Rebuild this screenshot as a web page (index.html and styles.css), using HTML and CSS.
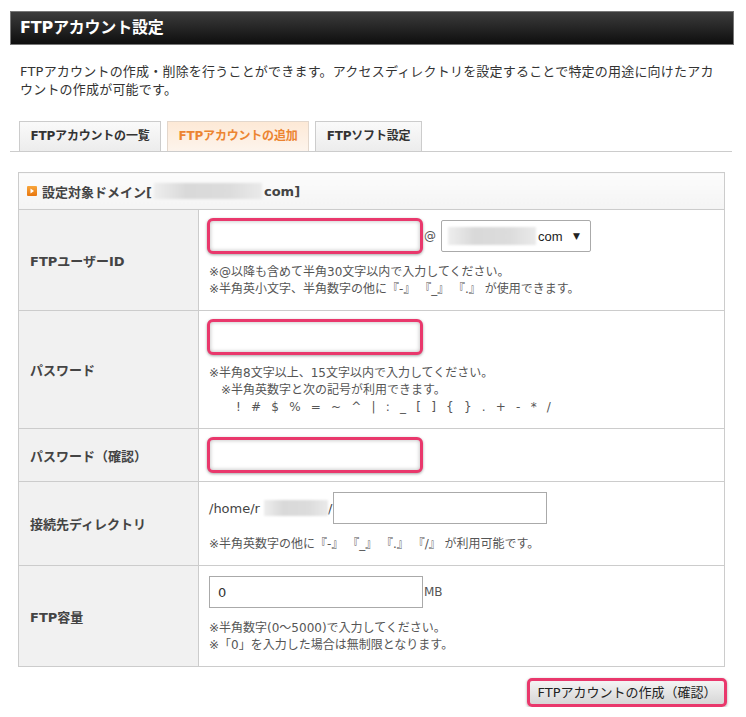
FILE: index.html
```html
<!DOCTYPE html>
<html lang="ja">
<head>
<meta charset="utf-8">
<title>FTPアカウント設定</title>
<link rel="stylesheet" href="styles.css">
</head>
<body>
<div class="page">
  <h1 class="title-bar">FTPアカウント設定</h1>
  <p class="desc">FTPアカウントの作成・削除を行うことができます。アクセスディレクトリを設定することで特定の用途に向けたアカウントの作成が可能です。</p>

  <div class="tabs">
    <div class="tab">FTPアカウントの一覧</div>
    <div class="tab active">FTPアカウントの追加</div>
    <div class="tab">FTPソフト設定</div>
  </div>

  <table class="form">
    <tr class="head-row">
      <td colspan="2">
        <span class="head-inner">
          <svg class="mark" width="10" height="10" viewBox="0 0 10 10"><defs><linearGradient id="og" x1="0" y1="0" x2="0" y2="1"><stop offset="0" stop-color="#f8a63c"/><stop offset="1" stop-color="#e8760e"/></linearGradient></defs><rect x="0" y="0" width="10" height="10" rx="1" fill="url(#og)"/><polygon points="3.5,2.5 7,5 3.5,7.5" fill="#fff"/></svg>
          設定対象ドメイン[<span class="blur b-domain"></span>com]
        </span>
      </td>
    </tr>
    <tr>
      <th>FTPユーザーID</th>
      <td>
        <div class="line">
          <input class="hl" type="text">
          <span class="at">@</span>
          <span class="select"><span class="blur b-sel"></span><span class="sel-text">com</span><span class="arrow">▼</span></span>
        </div>
        <div class="notes">
          <div>※@以降も含めて半角30文字以内で入力してください。</div>
          <div>※半角英小文字、半角数字の他に『-』 『_』 『.』 が使用できます。</div>
        </div>
      </td>
    </tr>
    <tr>
      <th>パスワード</th>
      <td>
        <div class="line"><input class="hl" type="password"></div>
        <div class="notes">
          <div>※半角8文字以上、15文字以内で入力してください。</div>
          <div class="ind1">※半角英数字と次の記号が利用できます。</div>
          <div class="ind2 symbols">! # $ % = ~ ^ | : _ [ ] { } . + - * /</div>
        </div>
      </td>
    </tr>
    <tr>
      <th>パスワード（確認）</th>
      <td>
        <div class="line"><input class="hl" type="password"></div>
      </td>
    </tr>
    <tr>
      <th>接続先ディレクトリ</th>
      <td>
        <div class="line">
          <span class="path">/home/r</span><span class="blur b-dir"></span><span class="path">/</span><input class="plain dir" type="text">
        </div>
        <div class="notes">
          <div>※半角英数字の他に『-』 『_』 『.』 『/』 が利用可能です。</div>
        </div>
      </td>
    </tr>
    <tr>
      <th>FTP容量</th>
      <td>
        <div class="line">
          <input class="plain cap" type="text" value="0"><span class="unit">MB</span>
        </div>
        <div class="notes">
          <div>※半角数字(0～5000)で入力してください。</div>
          <div>※「0」を入力した場合は無制限となります。</div>
        </div>
      </td>
    </tr>
  </table>

  <div class="actions">
    <button class="submit" type="button">FTPアカウントの作成（確認）</button>
  </div>
</div>
</body>
</html>
```

FILE: styles.css
```css
* { box-sizing: border-box; }
html, body { margin: 0; padding: 0; background: #fff; }
body {
  font-family: "DejaVu Sans", "Noto Sans CJK JP", sans-serif;
  color: #333;
  font-size: 13px;
}
.page { padding: 11px 12px 0 10px; width: 746px; }

.title-bar {
  margin: 0;
  height: 34px;
  border: 1px solid #777;
  background: linear-gradient(#3c3c3c, #0e0e0e);
  color: #fff;
  font-size: 16px;
  font-weight: bold;
  line-height: 31px;
  padding-left: 9px;
  letter-spacing: -0.2px;
}

.desc {
  margin: 18px 0 0 0;
  padding: 0 0 0 10px;
  width: 716px;
  line-height: 18px;
  font-size: 13px;
  color: #333;
  letter-spacing: 0.2px;
}

.tabs {
  display: flex;
  gap: 6px;
  margin-top: 22px;
  padding-left: 9px;
  border-bottom: 1px solid #ccc;
  width: 722px;
}
.tab {
  height: 30px;
  border: 1px solid #ccc;
  border-bottom: none;
  background: linear-gradient(#fafafa, #ececec);
  font-size: 12px;
  font-weight: bold;
  color: #333;
  line-height: 29px;
  padding: 0;
  text-align: center;
  white-space: nowrap;
  letter-spacing: -0.2px;
}
.tab:nth-child(1) { width: 142px; }
.tab:nth-child(2) { width: 142px; }
.tab:nth-child(3) { width: 107px; }
.tab.active {
  background: linear-gradient(#fde9d6, #fdf4ec);
  color: #ec8431;
  border-color: #e3d7cc;
}

.form {
  margin: 20px 0 0 8px;
  width: 707px;
  border-collapse: collapse;
  border: 1px solid #ccc;
}
.form th, .form td { border: 1px solid #ccc; }
.form th {
  width: 180px;
  background: #f1f1f1;
  text-align: left;
  font-size: 13px;
  font-weight: bold;
  color: #444;
  padding: 0 0 0 11px;
  vertical-align: middle;
}
.form td {
  padding: 10px 10px 10px 10px;
  vertical-align: top;
}
.head-row td {
  height: 37px;
  padding: 0 0 0 8px;
  background: linear-gradient(#fcfcfc, #f4f4f4);
  vertical-align: middle;
  font-weight: bold;
  font-size: 13px;
  color: #444;
}
.head-inner { display: flex; align-items: center; }
.mark { margin-right: 5px; flex: none; }

.blur {
  display: inline-block;
  background: linear-gradient(90deg, #eee, #d9d9d9 30%, #dcdcdc 70%, #eaeaea);
  filter: blur(1px);
}
.b-domain { width: 108px; height: 16px; margin: 0 2px 0 2px; }
.b-sel { width: 88px; height: 18px; margin-right: 2px; }
.b-dir { width: 64px; height: 16px; margin-left: 4px; }

.line { display: flex; align-items: center; height: 32px; }

input { font-family: inherit; font-size: 13px; color: #333; }
input.hl {
  width: 216px;
  height: 36px;
  margin: -2px -2px -2px -2px;
  border: 3px solid #e9386c;
  border-radius: 6px;
  background: #fff;
  box-shadow: inset 0 0 4px rgba(0,0,0,0.28), 0 1px 3px rgba(0,0,0,0.35);
  outline: none;
}
input.plain {
  height: 32px;
  border: 1px solid #aaa;
  background: #fff;
  padding: 0 8px;
  outline: none;
}
input.dir { width: 214px; margin-left: 1px; }
input.cap { width: 214px; }

.at { font-size: 12px; color: #555; margin: 0 5px 0 3px; }
.select {
  display: flex;
  align-items: center;
  width: 150px;
  height: 32px;
  border: 1px solid #aaa;
  border-radius: 2px;
  padding-left: 6px;
  background: #fff;
}
.sel-text { font-family: "Liberation Sans", sans-serif; font-size: 13px; color: #222; }
.arrow { font-size: 9px; margin-left: auto; margin-right: 10px; color: #222; }

.path { font-size: 13px; color: #444; }
.unit { font-size: 12px; color: #555; margin-left: 1px; }

.notes {
  margin-top: 12px;
  margin-bottom: 2px;
  font-size: 12px;
  line-height: 17px;
  color: #555;
  letter-spacing: 0;
}
.ind1 { padding-left: 12px; }
.ind2 { padding-left: 27px; }
.symbols { word-spacing: 6px; letter-spacing: 0.2px; }

.actions { text-align: right; padding: 11px 7px 0 0; }
.submit {
  width: 200px;
  height: 29px;
  border: 3px solid #e9386c;
  border-radius: 5px;
  background: linear-gradient(#f4f4f4, #d6d6d6);
  box-shadow: 0 1px 3px rgba(0,0,0,0.35);
  font-family: "DejaVu Sans", "Noto Sans CJK JP", sans-serif;
  font-size: 13px;
  color: #222;
  padding: 0;
  line-height: 21px;
}
```
